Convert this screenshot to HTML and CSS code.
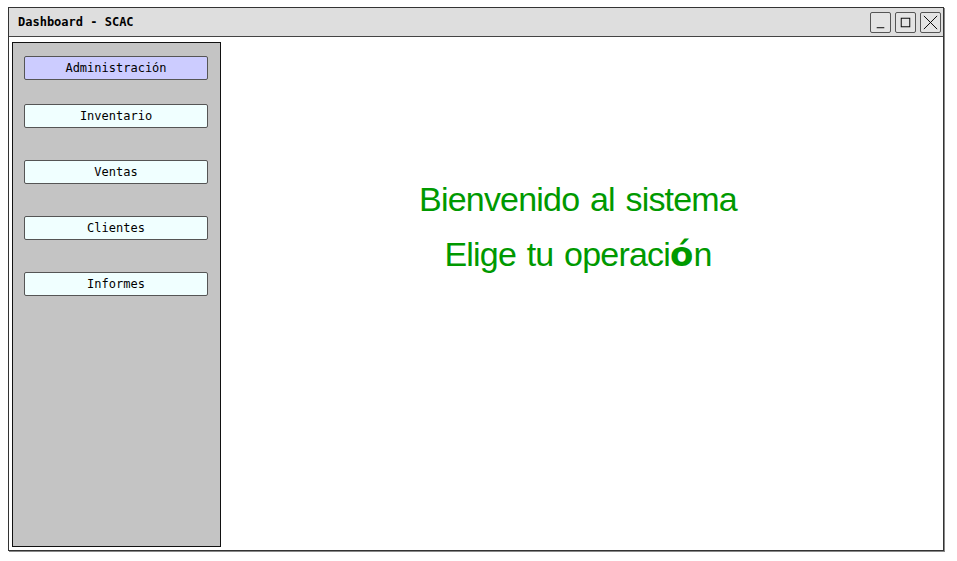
FILE: index.html
```html
<!DOCTYPE html>
<html>
<head>
<meta charset="utf-8">
<link rel="stylesheet" href="styles.css">
</head>
<body>
<div class="window">
  <div class="titlebar">
    <span class="title">Dashboard - SCAC</span>
    <div class="controls">
      <span class="ctl"><svg width="20" height="20" viewBox="0 0 20 20"><line x1="6" y1="15.5" x2="14" y2="15.5" stroke="#000" stroke-width="1"/></svg></span>
      <span class="ctl"><svg width="20" height="20" viewBox="0 0 20 20"><rect x="5.5" y="5.5" width="9" height="9" fill="none" stroke="#000" stroke-width="1"/></svg></span>
      <span class="ctl"><svg width="20" height="20" viewBox="0 0 20 20"><path d="M3 3 L17 17 M17 3 L3 17" stroke="#000" stroke-width="1"/></svg></span>
    </div>
  </div>
  <div class="body">
    <nav class="sidebar">
      <div class="btn active">Administración</div>
      <div class="btn first">Inventario</div>
      <div class="btn">Ventas</div>
      <div class="btn">Clientes</div>
      <div class="btn">Informes</div>
    </nav>
    <main class="main">
      <div class="line">Bienvenido al sistema</div>
      <div class="line">Elige tu operaci<b class="oacute">ó</b>n</div>
    </main>
  </div>
</div>
</body>
</html>
```

FILE: styles.css
```css
html, body { margin: 0; padding: 0; background: #fff; }
body { width: 957px; height: 561px; overflow: hidden; }
.window {
  margin: 7px 0 0 8px;
  width: 934px;
  height: 542px;
  border: 1px solid #333;
  box-shadow: 1px 1px 0 #888;
  display: flex;
  flex-direction: column;
  background: #fff;
}
.titlebar {
  background: #dedede;
  border-bottom: 1px solid #444;
  display: flex;
  align-items: center;
  justify-content: space-between;
  box-sizing: border-box;
  height: 29px;
}
.title {
  font-family: "DejaVu Sans Mono", monospace;
  font-weight: bold;
  font-size: 12px;
  margin-left: 9px;
}
.controls { display: flex; gap: 4px; margin-right: 2px; }
.ctl {
  width: 19px; height: 19px;
  border: 1px solid #555;
  border-radius: 2px;
  background: #e4e4e4;
  display: flex;
}
.ctl svg { width: 19px; height: 19px; }
.body { flex: 1; display: flex; padding: 5px 0 3px 3px; }
.sidebar {
  background: #c4c4c4;
  border: 1px solid #111;
  display: flex;
  flex-direction: column;
  padding: 13px 0 0 11px;
  box-sizing: border-box;
  width: 209px;
}
.btn {
  width: 182px;
  height: 22px;
  border: 1px solid #555;
  border-radius: 2px;
  background: #f0ffff;
  font-family: "DejaVu Sans Mono", monospace;
  font-size: 12px;
  display: flex;
  align-items: center;
  justify-content: center;
  margin-bottom: 32px;
}
.btn.active { background: #ccccff; margin-bottom: 24px; }
.main {
  flex: 1;
  display: flex;
  flex-direction: column;
  align-items: center;
  padding-top: 135px;
  padding-right: 8px;
  color: #009900;
  font-family: "Liberation Sans", Arial, sans-serif;
  font-size: 34px;
  letter-spacing: -0.8px;
  word-spacing: 2px;
}
.line { height: 55px; line-height: 44px; }
.oacute { font-family: "DejaVu Sans", sans-serif; font-weight: bold; letter-spacing: 0; }
```
